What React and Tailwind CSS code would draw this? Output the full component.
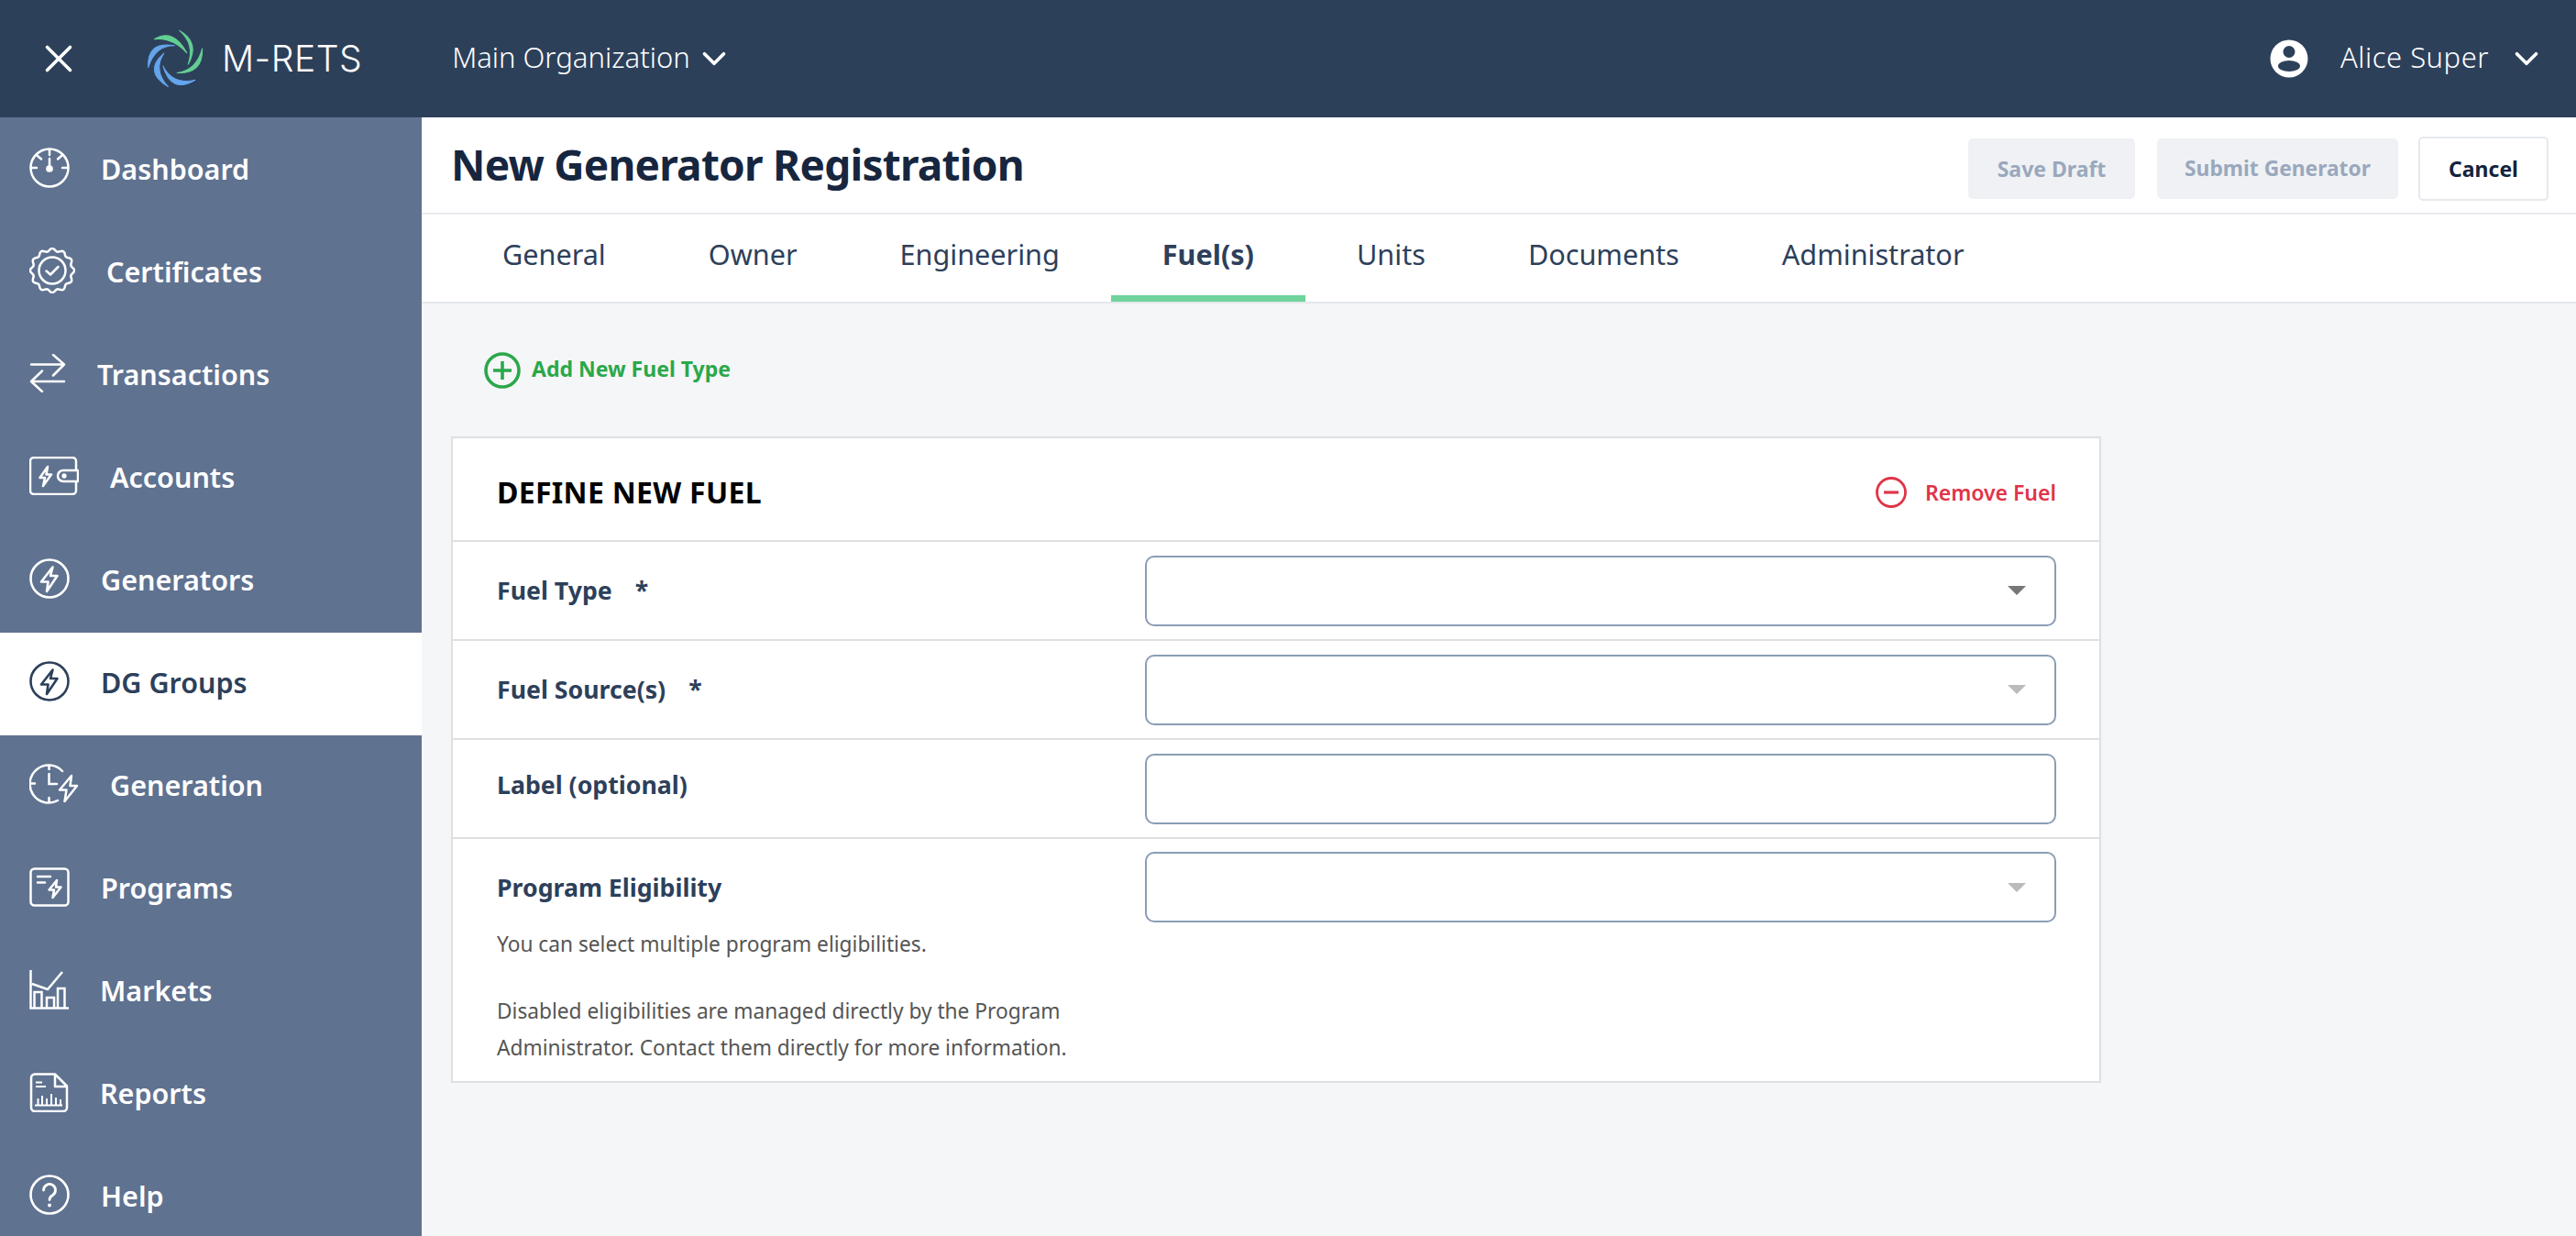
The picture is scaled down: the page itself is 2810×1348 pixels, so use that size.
import { X, ChevronDown } from 'lucide-react';

function Bolt({ d }) {
    return <path d={d} strokeLinejoin="round" />;
}

function DashboardIcon() {
    return (
        <svg className="w-[44px] h-[44px] shrink-0" viewBox="0 0 44 44" fill="none" stroke="currentColor" strokeWidth="2.5" strokeLinecap="round">
            <circle cx="22" cy="22" r="20.5" />
            <path d="M22 2v6M9 9l4 3.5M35 9l-4 3.5M2 22h6M36 22h6M22 12v10" />
            <circle cx="22" cy="23" r="2.6" fill="currentColor" />
        </svg>
    );
}

function badgePath() {
    let d = '';
    for (let i = 0; i <= 120; i++) {
        const a = (i / 120) * Math.PI * 2;
        const r = 22.6 + 1.5 * Math.cos(a * 12);
        d += `${i ? 'L' : 'M'}${(25 + r * Math.sin(a)).toFixed(2)} ${(25 - r * Math.cos(a)).toFixed(2)}`;
    }
    return d + 'Z';
}

function CertificatesIcon() {
    return (
        <svg className="w-[50px] h-[50px] shrink-0" viewBox="0 0 50 50" fill="none" stroke="currentColor" strokeWidth="2.5" strokeLinecap="round" strokeLinejoin="round">
            <path d={badgePath()} />
            <circle cx="25" cy="25" r="14.5" />
            <path d="M18.5 25.5l4.5 4 8.5-8.5" />
        </svg>
    );
}

function TransactionsIcon() {
    return (
        <svg className="w-[40px] h-[42px] shrink-0" viewBox="0 0 40 42" fill="none" stroke="currentColor" strokeWidth="2.5" strokeLinecap="round" strokeLinejoin="round">
            <path d="M2 11.5h36M26 1l12 10.500-12 12M38 30H2M14 18.500L2 30l12 11" />
        </svg>
    );
}

function AccountsIcon() {
    return (
        <svg className="w-[54px] h-[42px] shrink-0" viewBox="0 0 54 42" fill="none" stroke="currentColor" strokeWidth="2.5" strokeLinejoin="round">
            <path d="M51 15V5a4 4 0 0 0-4-4H5a4 4 0 0 0-4 4v32a4 4 0 0 0 4 4h42a4 4 0 0 0 4-4v-9" />
            <path d="M53 15H37a6 6 0 0 0 0 12h16z" />
            <circle cx="38" cy="21" r="1.4" fill="currentColor" />
            <Bolt d="M20 11l-8.500 12h5.500l-2 9 9-12.500h-5.500z" />
        </svg>
    );
}

function BoltCircleIcon() {
    return (
        <svg className="w-[44px] h-[44px] shrink-0" viewBox="0 0 44 44" fill="none" stroke="currentColor" strokeWidth="2.600">
            <circle cx="22" cy="22" r="20.500" />
            <Bolt d="M25.500 9.500L13 25.500h7.500L19 36l11.500-17H23z" />
        </svg>
    );
}

function GenerationIcon() {
    return (
        <svg className="w-[54px] h-[44px] shrink-0" viewBox="0 0 54 44" fill="none" stroke="currentColor" strokeWidth="2.5" strokeLinecap="round">
            <path d="M36 8A20.500 20.500 0 1 0 31 40M21.500 2v4M2 21.500h4M21.500 37v4M21.500 11v11H30" />
            <Bolt d="M46 13L33 28.500h7.500L38.500 41 52 24h-7.500z" />
        </svg>
    );
}

function ProgramsIcon() {
    return (
        <svg className="w-[44px] h-[43px] shrink-0" viewBox="0 0 44 43" fill="none" stroke="currentColor" strokeWidth="2.5" strokeLinecap="round">
            <rect x="1.500" y="1.500" width="41" height="40" rx="4" />
            <path d="M9 10h14M9 16.500h8" />
            <Bolt d="M30 14l-8.500 10.500h5.500L25.500 33l9-11.500h-5.500z" />
        </svg>
    );
}

function MarketsIcon() {
    return (
        <svg className="w-[43px] h-[43px] shrink-0" viewBox="0 0 43 43" fill="none" stroke="currentColor" strokeWidth="2.5">
            <path d="M1.500 0v41.500H43M3 15l17 6L36 2M5.500 41V24h8v17M19 41V30h8v11M31 41V20h7.500v21" />
        </svg>
    );
}

function ReportsIcon() {
    return (
        <svg className="w-[43px] h-[43px] shrink-0" viewBox="0 0 43 43" fill="none" stroke="currentColor" strokeWidth="2.500" strokeLinejoin="round">
            <path d="M28 1.500H6a4 4 0 0 0-4 4V38a4 4 0 0 0 4 4h31a4 4 0 0 0 4-4V14.500zM28 1.500V15h13" />
            <path d="M7 10.500h7M7 15h11M6 35.500h30M9.500 35v-7M14 35v-10M19 35v-7M24 35v-12M29 35v-8M34 35v-6" strokeWidth="2" />
        </svg>
    );
}

function HelpIcon() {
    return (
        <svg className="w-[44px] h-[44px] shrink-0" viewBox="0 0 44 44" fill="none" stroke="currentColor" strokeWidth="2.600" strokeLinecap="round">
            <circle cx="22" cy="22" r="20.500" />
            <path d="M15.500 17a6.500 6.500 0 1 1 10 5.500c-2.500 1.500-3.500 2.700-3.500 5" strokeWidth="2.800" />
            <circle cx="22" cy="33.500" r="1.900" fill="currentColor" stroke="none" />
        </svg>
    );
}

function Logo() {
    return (
        <svg className="w-[62px] h-[64px] shrink-0" viewBox="125 63 185 191" strokeWidth="3" strokeLinejoin="round">
            <g fill="#62cf92" stroke="#62cf92">
                <path d="M150 95Q212 58 256 140Q208 88 150 95Z" />
                <path d="M232 67Q300 105 260 177Q282 110 232 67Z" />
                <path d="M306 125Q310 208 224 205Q288 195 306 125Z" />
            </g>
            <g fill="#64a5ec" stroke="#64a5ec">
                <path d="M130 187Q125 100 216 116Q152 115 130 187Z" />
                <path d="M195 250Q112 200 181 141Q145 195 195 250Z" />
                <path d="M283 228Q205 275 178 182Q210 245 283 228Z" />
            </g>
        </svg>
    );
}

function Caret({ dim }) {
    return (
        <svg className={dim ? 'w-[20px] h-[10px] text-[#bbbbbb]' : 'w-[20px] h-[10px] text-[#777777]'} viewBox="0 0 20 10">
            <path d="M0 0h20L10 10z" fill="currentColor" />
        </svg>
    );
}

function Field({ caret, dim }) {
    return (
        <div className="w-[994px] h-[77px] shrink-0 rounded-[10px] border-2 border-[#8a9db5] bg-white flex items-center justify-end pr-[31px]">
            {caret && <Caret dim={dim} />}
        </div>
    );
}

const navItems = [
    { label: 'Dashboard', icon: DashboardIcon },
    { label: 'Certificates', icon: CertificatesIcon },
    { label: 'Transactions', icon: TransactionsIcon },
    { label: 'Accounts', icon: AccountsIcon },
    { label: 'Generators', icon: BoltCircleIcon },
    { label: 'DG Groups', icon: BoltCircleIcon, active: true },
    { label: 'Generation', icon: GenerationIcon },
    { label: 'Programs', icon: ProgramsIcon },
    { label: 'Markets', icon: MarketsIcon },
    { label: 'Reports', icon: ReportsIcon },
    { label: 'Help', icon: HelpIcon },
];

const tabs = ['General', 'Owner', 'Engineering', 'Fuel(s)', 'Units', 'Documents', 'Administrator'];

export default function App() {
    return (
        <div className="h-screen overflow-hidden flex flex-col bg-[#f5f6f8] font-['Noto_Sans','Lato',sans-serif] text-[#2d405a]">
            {/* Top bar */}
            <header className="h-[128px] shrink-0 bg-[#2d405a] text-white flex items-center">
                <X className="w-[50px] h-[50px] ml-[39px] shrink-0" strokeWidth={1.7} />
                <div className="ml-[71px]"><Logo /></div>
                <span className="ml-[20px] font-['Inter',sans-serif] font-light text-[39px] tracking-[0.5px]">M-RETS</span>
                <span className="ml-[98px] pb-[3px] text-[31px] font-light">Main Organization</span>
                <ChevronDown className="w-[42px] h-[42px] ml-[5px]" strokeWidth={2.1} />
                <div className="ml-auto flex items-center pr-[33px]">
                    <svg className="w-[42px] h-[42px]" viewBox="0 0 42 42">
                        <circle cx="21" cy="21" r="20.500" fill="#ffffff" />
                        <circle cx="21" cy="13.500" r="6.500" fill="#2d405a" />
                        <ellipse cx="21" cy="29" rx="12" ry="6" fill="#2d405a" />
                    </svg>
                    <span className="ml-[35px] pb-[3px] text-[31px] font-light tracking-[0.5px]">Alice Super</span>
                    <ChevronDown className="w-[42px] h-[42px] ml-[20px]" strokeWidth={2.1} />
                </div>
            </header>

            <div className="flex-1 flex min-h-0">
                {/* Sidebar */}
                <aside className="w-[460px] shrink-0 bg-[#5f7290] text-white pt-[2px] overflow-hidden">
                    {navItems.map(({ label, icon: Icon, active }) => (
                        <div key={label} className={`h-[112px] pb-[6px] pl-[32px] flex items-center gap-[34px] ${active ? 'bg-white text-[#2d405a]' : ''}`}>
                            <Icon />
                            <span className="pt-[4px] text-[30.5px] font-semibold">{label}</span>
                        </div>
                    ))}
                </aside>

                <main className="flex-1 min-w-0">
                    {/* Title bar */}
                    <div className="h-[106px] bg-white border-b-2 border-[#e8ebef] pl-[32px] pr-[30px] flex items-center justify-between">
                        <h1 className="text-[46px] tracking-[-0.77px] font-bold text-[#17263f] pb-[2px]">New Generator Registration</h1>
                        <div className="flex items-center pt-[8px]">
                            <button className="w-[182px] h-[66px] rounded-[5px] bg-[#eff1f4] text-[#9aa8bd] text-[23px] font-bold">Save Draft</button>
                            <button className="w-[263px] h-[66px] ml-[24px] rounded-[5px] bg-[#eff1f4] text-[#9aa8bd] text-[22.8px] font-bold">Submit Generator</button>
                            <button className="w-[142px] h-[70px] ml-[22px] rounded-[5px] bg-white border-2 border-[#e5e9ee] text-[#14233c] text-[23px] font-bold">Cancel</button>
                        </div>
                    </div>

                    {/* Tabs */}
                    <div className="h-[97px] bg-white border-b-2 border-[#e4e7eb] pl-[32px] flex">
                        {tabs.map((tab) => (
                            <div key={tab} className={`h-[95px] px-[56px] flex items-center border-b-[7px] text-[30.6px] ${tab === 'Fuel(s)' ? 'border-[#6fd39b] font-bold' : 'border-transparent'}`}>
                                {tab}
                            </div>
                        ))}
                    </div>

                    <div className="pl-[32px]">
                        {/* Add fuel */}
                        <div className="mt-[53px] h-[40px] pl-[36px] flex items-center text-[#2aa84a]">
                            <svg className="w-[40px] h-[40px]" viewBox="0 0 40 40" fill="none" stroke="currentColor" strokeWidth="3.600">
                                <circle cx="20" cy="20" r="18" />
                                <path d="M20 10v20M10 20h20" />
                            </svg>
                            <span className="ml-[12px] pb-[3px] text-[23px] font-bold">Add New Fuel Type</span>
                        </div>

                        {/* Fuel card */}
                        <div className="mt-[52px] w-[1800px] bg-white border-2 border-[#e0e0e0]">
                            <div className="h-[113px] pt-[7px] border-b-2 border-[#e0e0e0] pl-[48px] pr-[47px] flex items-center justify-between">
                                <span className="text-[32px] tracking-[0.3px] font-bold text-black">DEFINE NEW FUEL</span>
                                <div className="flex items-center text-[#e03448]">
                                    <svg className="w-[34px] h-[34px]" viewBox="0 0 34 34" fill="none" stroke="currentColor" strokeWidth="2.800">
                                        <circle cx="17" cy="17" r="15.500" />
                                        <path d="M9 17h16" strokeWidth="3.200" />
                                    </svg>
                                    <span className="ml-[20px] text-[23px] font-semibold">Remove Fuel</span>
                                </div>
                            </div>

                            <div className="h-[108px] border-b-2 border-[#e0e0e0] pl-[48px] pr-[47px] flex items-center justify-between">
                                <span className="text-[26.7px] font-bold">Fuel Type<span className="ml-[25px]">*</span></span>
                                <Field caret />
                            </div>
                            <div className="h-[108px] border-b-2 border-[#e0e0e0] pl-[48px] pr-[47px] flex items-center justify-between">
                                <span className="text-[26.7px] font-bold">Fuel Source(s)<span className="ml-[25px]">*</span></span>
                                <Field caret dim />
                            </div>
                            <div className="h-[108px] border-b-2 border-[#e0e0e0] pl-[48px] pr-[47px] flex items-center justify-between">
                                <span className="text-[26.7px] font-bold pb-[8px]">Label (optional)</span>
                                <Field />
                            </div>
                            <div className="h-[264px] pl-[48px] pr-[47px] pt-[14px] flex items-start justify-between">
                                <div className="w-[640px]">
                                    <div className="mt-[19px] text-[26.7px] font-bold leading-[40px]">Program Eligibility</div>
                                    <p className="mt-[22px] text-[22.7px] leading-[40px] text-[#555555]">You can select multiple program eligibilities.</p>
                                    <p className="mt-[33px] text-[22.7px] leading-[40px] text-[#555555]">Disabled eligibilities are managed directly by the Program Administrator. Contact them directly for more information.</p>
                                </div>
                                <Field caret dim />
                            </div>
                        </div>
                    </div>
                </main>
            </div>
        </div>
    );
}
